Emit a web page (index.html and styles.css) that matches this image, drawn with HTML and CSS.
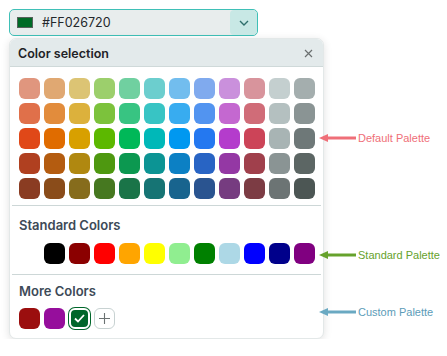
FILE: index.html
```html
<!DOCTYPE html>
<html lang="en">
<head>
    <meta charset="UTF-8">
    <title>Color Picker</title>
    <link rel="stylesheet" href="styles.css">
</head>
<body>
    <div class="picker">
        <!-- Color input -->
        <div class="color-input">
            <span class="preview"></span>
            <span class="value">#FF026720</span>
            <span class="drop-btn">
                <svg width="10" height="6" viewBox="0 0 10 6"><path d="M1 1l4 4 4-4" fill="none" stroke="#2f6f6c" stroke-width="1.4"/></svg>
            </span>
        </div>

        <!-- Popup -->
        <div class="popup">
            <div class="popup-header">
                <span class="title">Color selection</span>
                <svg class="close" width="9" height="9" viewBox="0 0 9 9"><path d="M1 1l7 7M8 1l-7 7" stroke="#6b7070" stroke-width="1.2"/></svg>
            </div>

            <div class="section default">
                <div class="grid">
                    <span class="sw" style="background:#e0967e"></span>
                    <span class="sw" style="background:#e0a872"></span>
                    <span class="sw" style="background:#dcc474"></span>
                    <span class="sw" style="background:#9ccf6c"></span>
                    <span class="sw" style="background:#70d0a0"></span>
                    <span class="sw" style="background:#6ccece"></span>
                    <span class="sw" style="background:#72bdee"></span>
                    <span class="sw" style="background:#80aaee"></span>
                    <span class="sw" style="background:#ca90dc"></span>
                    <span class="sw" style="background:#d8949c"></span>
                    <span class="sw" style="background:#c4cfcf"></span>
                    <span class="sw" style="background:#a4aeae"></span>

                    <span class="sw" style="background:#e0704a"></span>
                    <span class="sw" style="background:#e28c3c"></span>
                    <span class="sw" style="background:#dcb13c"></span>
                    <span class="sw" style="background:#7cc23c"></span>
                    <span class="sw" style="background:#38c482"></span>
                    <span class="sw" style="background:#38c4c4"></span>
                    <span class="sw" style="background:#38acf0"></span>
                    <span class="sw" style="background:#5294f0"></span>
                    <span class="sw" style="background:#c468d0"></span>
                    <span class="sw" style="background:#d06c78"></span>
                    <span class="sw" style="background:#b4c0c0"></span>
                    <span class="sw" style="background:#8a9494"></span>

                    <span class="sw" style="background:#e04818"></span>
                    <span class="sw" style="background:#e06c00"></span>
                    <span class="sw" style="background:#d8a000"></span>
                    <span class="sw" style="background:#5cb800"></span>
                    <span class="sw" style="background:#00b858"></span>
                    <span class="sw" style="background:#00b8b8"></span>
                    <span class="sw" style="background:#0098f0"></span>
                    <span class="sw" style="background:#2478f0"></span>
                    <span class="sw" style="background:#b43ccc"></span>
                    <span class="sw" style="background:#cc4458"></span>
                    <span class="sw" style="background:#a8b4b4"></span>
                    <span class="sw" style="background:#6e7878"></span>

                    <span class="sw" style="background:#b04020"></span>
                    <span class="sw" style="background:#b45c10"></span>
                    <span class="sw" style="background:#b08810"></span>
                    <span class="sw" style="background:#4e9810"></span>
                    <span class="sw" style="background:#0c9850"></span>
                    <span class="sw" style="background:#0c9494"></span>
                    <span class="sw" style="background:#0c80c4"></span>
                    <span class="sw" style="background:#2864c4"></span>
                    <span class="sw" style="background:#9438a4"></span>
                    <span class="sw" style="background:#a0404c"></span>
                    <span class="sw" style="background:#8a9494"></span>
                    <span class="sw" style="background:#5c6664"></span>

                    <span class="sw" style="background:#8a3c22"></span>
                    <span class="sw" style="background:#8a4c1a"></span>
                    <span class="sw" style="background:#866c1c"></span>
                    <span class="sw" style="background:#467820"></span>
                    <span class="sw" style="background:#1a7448"></span>
                    <span class="sw" style="background:#167474"></span>
                    <span class="sw" style="background:#18648e"></span>
                    <span class="sw" style="background:#2a5490"></span>
                    <span class="sw" style="background:#763c80"></span>
                    <span class="sw" style="background:#7c3c44"></span>
                    <span class="sw" style="background:#6c7474"></span>
                    <span class="sw" style="background:#4c5654"></span>
                </div>
                <div class="note note-default">
                    <svg width="37" height="8" viewBox="0 0 37 8"><path d="M8 4H37" stroke="#ef6f78" stroke-width="3"/><path d="M0 4L9 0V8Z" fill="#ef6f78"/></svg>
                    <span>Default Palette</span>
                </div>
            </div>

            <div class="section standard">
                <div class="heading">Standard Colors</div>
                <div class="grid">
                    <span class="sw" style="background:#ffffff"></span>
                    <span class="sw" style="background:#000000"></span>
                    <span class="sw" style="background:#8b0000"></span>
                    <span class="sw" style="background:#ff0000"></span>
                    <span class="sw" style="background:#ffa500"></span>
                    <span class="sw" style="background:#ffff00"></span>
                    <span class="sw" style="background:#90ee90"></span>
                    <span class="sw" style="background:#008000"></span>
                    <span class="sw" style="background:#add8e6"></span>
                    <span class="sw" style="background:#0000ff"></span>
                    <span class="sw" style="background:#00008b"></span>
                    <span class="sw" style="background:#800080"></span>
                </div>
                <div class="note note-standard">
                    <svg width="37" height="8" viewBox="0 0 37 8"><path d="M8 4H37" stroke="#66a22c" stroke-width="3"/><path d="M0 4L9 0V8Z" fill="#66a22c"/></svg>
                    <span>Standard Palette</span>
                </div>
            </div>

            <div class="section custom">
                <div class="heading">More Colors</div>
                <div class="grid">
                    <span class="sw" style="background:#9b0e0e"></span>
                    <span class="sw" style="background:#960e9c"></span>
                    <span class="sw selected" style="background:#00662a">
                        <svg width="11" height="9" viewBox="0 0 11 9"><path d="M1 4.5l3 3 6-6.5" fill="none" stroke="#fff" stroke-width="1.8"/></svg>
                    </span>
                    <span class="sw add">
                        <svg width="11" height="11" viewBox="0 0 11 11"><path d="M5.5 0v11M0 5.5h11" stroke="#6b7272" stroke-width="1.1"/></svg>
                    </span>
                </div>
                <div class="note note-custom">
                    <svg width="37" height="8" viewBox="0 0 37 8"><path d="M8 4H37" stroke="#6aa9c2" stroke-width="3"/><path d="M0 4L9 0V8Z" fill="#6aa9c2"/></svg>
                    <span>Custom Palette</span>
                </div>
            </div>
        </div>
    </div>
</body>
</html>
```

FILE: styles.css
```css
body {
    margin: 0;
    padding: 9px 0 0 9px;
    background-color: #ffffff;
    font-family: Inter, "Noto Sans", sans-serif;
    color: #2b3035;
}

.picker {
    width: 315px;
}

/* input */
.color-input {
    display: flex;
    align-items: center;
    width: 249px;
    height: 27px;
    box-sizing: border-box;
    border: 1px solid #3fc0b7;
    border-radius: 5px;
    background-color: #e8eded;
    overflow: hidden;
}

.preview {
    width: 14px;
    height: 9px;
    margin-left: 7px;
    border: 1px solid #56615b;
    background-color: #006b26;
}

.value {
    margin-left: 9px;
    font-size: 12.5px;
    color: #23282c;
    flex: 1;
}

.drop-btn {
    width: 27px;
    height: 100%;
    display: flex;
    align-items: center;
    justify-content: center;
    background-color: #c8e8e5;
    border-radius: 4px;
}

/* popup */
.popup {
    margin-top: 2px;
    width: 315px;
    background-color: #ffffff;
    border: 1px solid #e3e8e8;
    border-radius: 7px;
    box-shadow: 0 2px 8px rgba(0, 0, 0, 0.12);
    box-sizing: border-box;
}

.popup-header {
    display: flex;
    align-items: center;
    justify-content: space-between;
    height: 28px;
    padding: 1px 10px 0 8px;
    box-sizing: border-box;
    background-color: #e3eaeb;
    border-bottom: 1px solid #cfd9d9;
    border-radius: 6px 6px 0 0;
}

.title {
    font-size: 12.5px;
    font-weight: 600;
    color: #1f2327;
}

.section {
    position: relative;
    margin: 0 2px;
    padding: 0 6px;
    border-top: 1px solid #cdd7d7;
}

.section.default {
    border-top: none;
    padding-top: 11px;
    padding-bottom: 6px;
}

.section.standard {
    padding-bottom: 10px;
}

.section.custom {
    padding-bottom: 9px;
}

.heading {
    font-size: 13px;
    font-weight: 600;
    color: #3d4a57;
    padding: 11px 1px 10px;
    line-height: 16px;
}

.section.custom .heading {
    padding-top: 8px;
    padding-bottom: 9px;
}

.grid {
    display: grid;
    grid-template-columns: repeat(12, 21px);
    gap: 4px;
    padding-left: 1px;
}

.sw {
    width: 21px;
    height: 21px;
    border-radius: 6px;
    box-sizing: border-box;
}

.sw.selected {
    display: flex;
    align-items: center;
    justify-content: center;
    border: 2px solid #ffffff;
    box-shadow: 0 0 0 1px #00662a;
}

.sw.add {
    display: flex;
    align-items: center;
    justify-content: center;
    border: 1px solid #c8d2d2;
    background-color: #ffffff;
}

/* callouts */
.note {
    position: absolute;
    left: 307px;
    display: flex;
    align-items: center;
    gap: 2px;
    font-family: "Liberation Sans", Arial, sans-serif;
    font-size: 11px;
    white-space: nowrap;
}

.note-default {
    top: 65px;
    color: #ef6f78;
}

.note-standard {
    top: 43px;
    color: #66a22c;
}

.note-custom {
    top: 31px;
    color: #5c9cb8;
}
```
